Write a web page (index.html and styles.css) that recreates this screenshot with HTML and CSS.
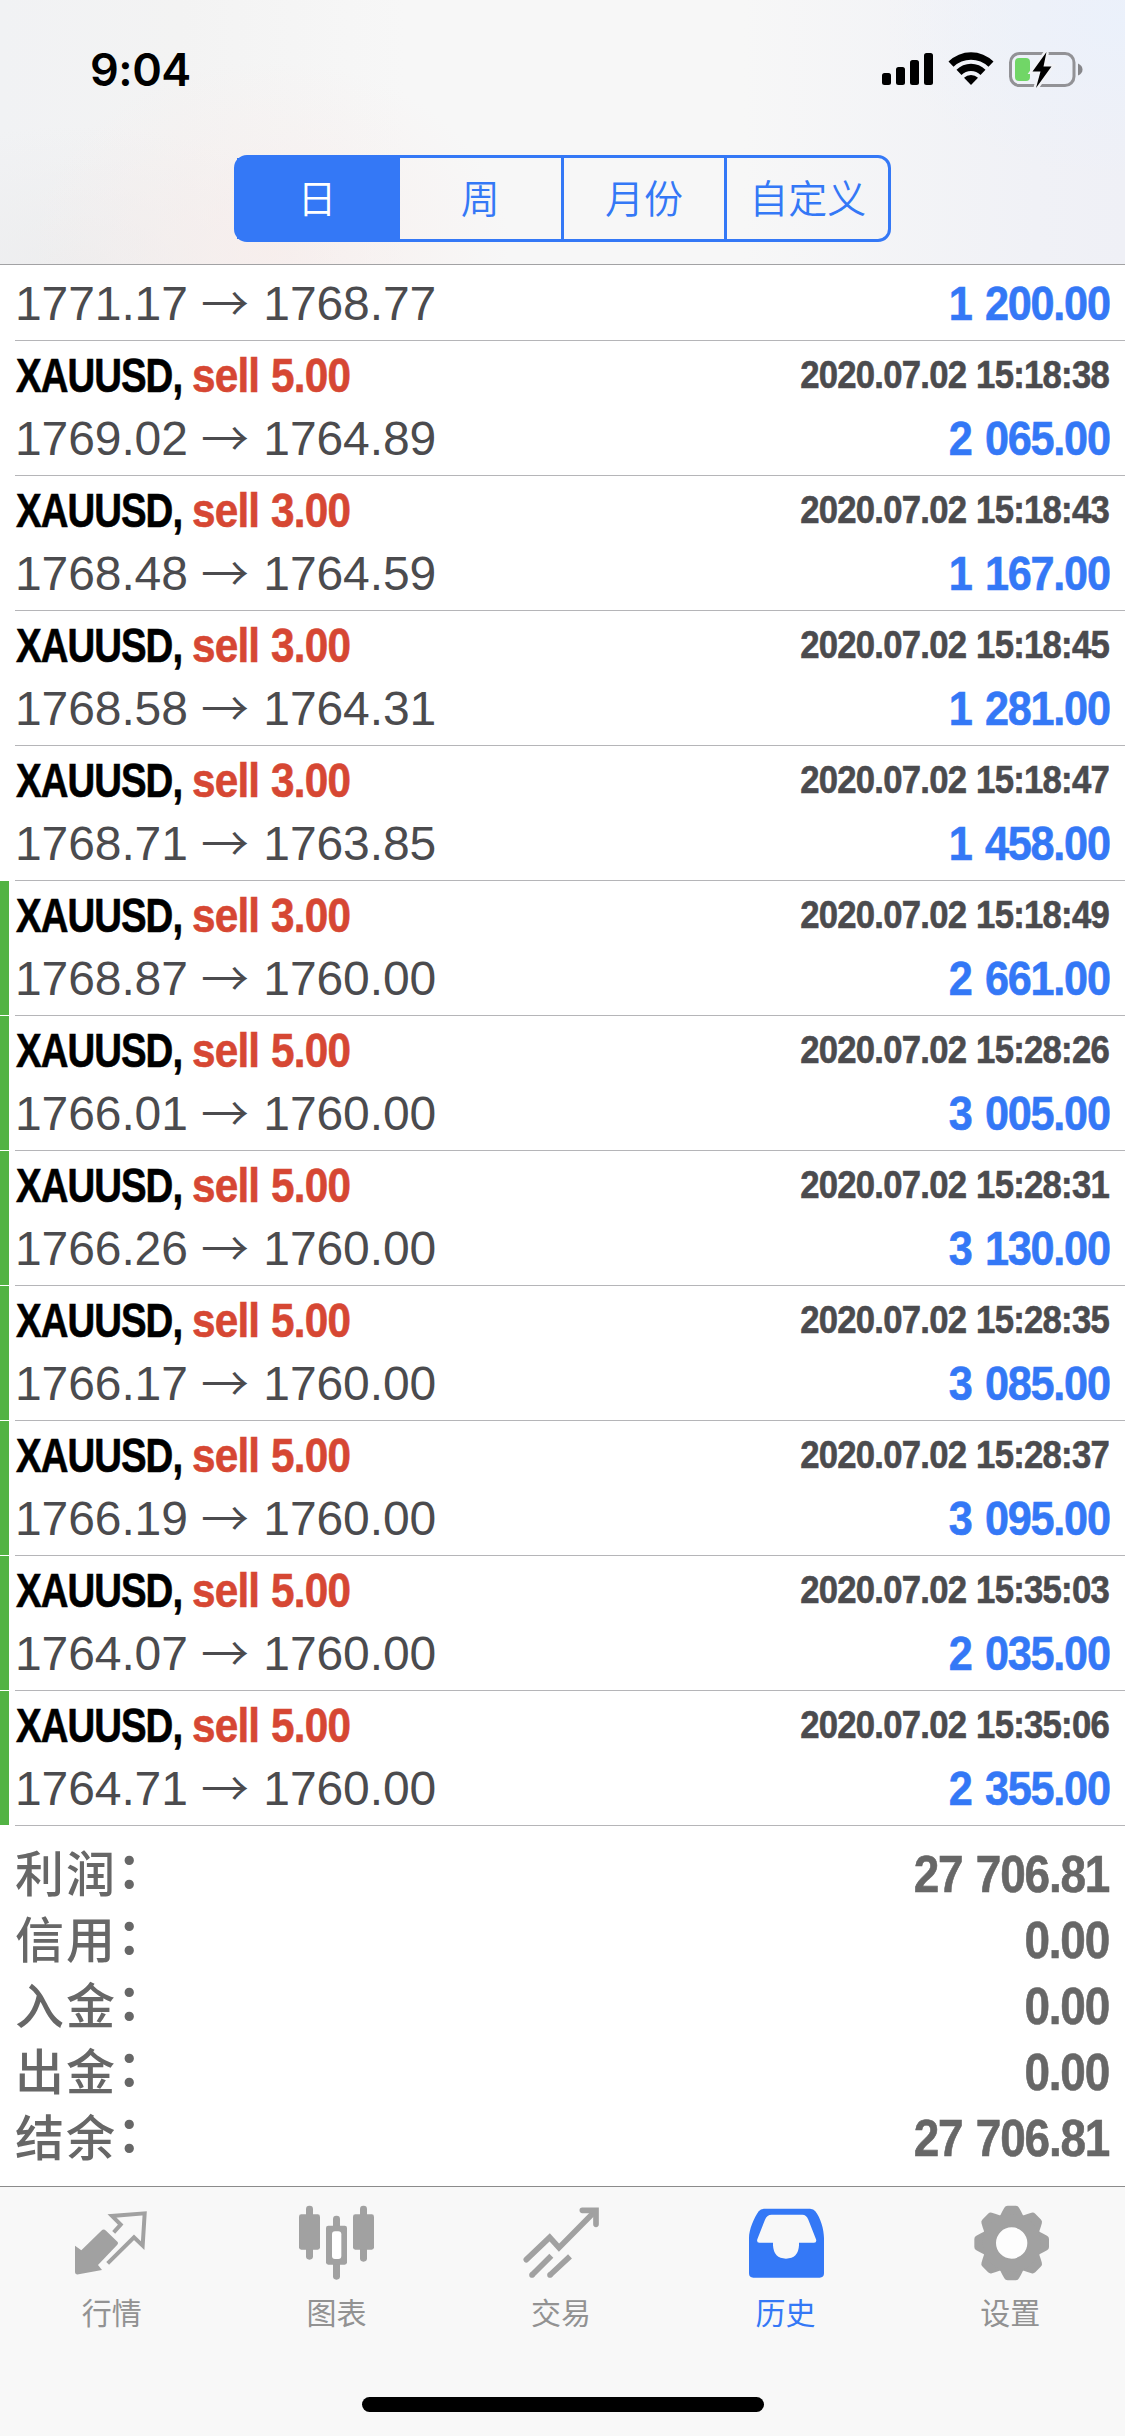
FILE: index.html
```
<!DOCTYPE html>
<html lang="zh-CN">
<head>
<meta charset="utf-8">
<title>历史</title>
<link rel="stylesheet" href="styles.css">
</head>
<body>
<header class="top">
  <div class="status">
    <span class="time">9:04</span>
    <svg class="status-icons" width="202" height="36" viewBox="0 0 202 36">
      <rect x="0" y="21" width="9" height="12" rx="2.5"/>
      <rect x="14" y="15" width="9" height="18" rx="2.5"/>
      <rect x="28" y="8" width="9" height="25" rx="2.5"/>
      <rect x="42" y="1" width="9" height="32" rx="2.5"/>
      <path d="M66.500 9.500A32 32 0 0 1 111.500 9.500L106.500 14.800A25 25 0 0 0 71.500 14.800Z"/>
      <path d="M74.500 17.700A20.500 20.500 0 0 1 103.500 17.700L98.500 22.900A13.800 13.800 0 0 0 79.500 22.900Z"/>
      <path d="M82 25.800A10 10 0 0 1 96 25.800L89 33Z"/>
      <rect x="128.500" y="1.500" width="63.500" height="32" rx="9" fill="none" stroke="#929296" stroke-width="3"/>
      <path d="M196 11.500Q200.500 13.500 200.500 17.500T196 23.500Z" fill="#86868a"/>
      <rect x="133" y="6" width="15" height="23" rx="4" fill="#71d667"/>
      <path class="bolt" d="M164.500 0L150.500 19.500H158.500L154 36L169.500 14.500H161.500Z"/>
    </svg>
  </div>
  <nav class="segments">
    <span class="segment segment-on">日</span>
    <span class="segment">周</span>
    <span class="segment">月份</span>
    <span class="segment">自定义</span>
  </nav>
</header>

<main class="deals">
  <div class="deal deal-cut"><div class="line"><span class="price">1771.17 <i class="arrow">→</i> 1768.77</span><span class="profit">1 200.00</span></div></div>
  <div class="deal"><div class="line"><span class="symbol">XAUUSD,</span><span class="side">sell 5.00</span><span class="date">2020.07.02 15:18:38</span></div><div class="line"><span class="price">1769.02 <i class="arrow">→</i> 1764.89</span><span class="profit">2 065.00</span></div></div>
  <div class="deal"><div class="line"><span class="symbol">XAUUSD,</span><span class="side">sell 3.00</span><span class="date">2020.07.02 15:18:43</span></div><div class="line"><span class="price">1768.48 <i class="arrow">→</i> 1764.59</span><span class="profit">1 167.00</span></div></div>
  <div class="deal"><div class="line"><span class="symbol">XAUUSD,</span><span class="side">sell 3.00</span><span class="date">2020.07.02 15:18:45</span></div><div class="line"><span class="price">1768.58 <i class="arrow">→</i> 1764.31</span><span class="profit">1 281.00</span></div></div>
  <div class="deal"><div class="line"><span class="symbol">XAUUSD,</span><span class="side">sell 3.00</span><span class="date">2020.07.02 15:18:47</span></div><div class="line"><span class="price">1768.71 <i class="arrow">→</i> 1763.85</span><span class="profit">1 458.00</span></div></div>
  <div class="deal deal-tp"><div class="line"><span class="symbol">XAUUSD,</span><span class="side">sell 3.00</span><span class="date">2020.07.02 15:18:49</span></div><div class="line"><span class="price">1768.87 <i class="arrow">→</i> 1760.00</span><span class="profit">2 661.00</span></div></div>
  <div class="deal deal-tp"><div class="line"><span class="symbol">XAUUSD,</span><span class="side">sell 5.00</span><span class="date">2020.07.02 15:28:26</span></div><div class="line"><span class="price">1766.01 <i class="arrow">→</i> 1760.00</span><span class="profit">3 005.00</span></div></div>
  <div class="deal deal-tp"><div class="line"><span class="symbol">XAUUSD,</span><span class="side">sell 5.00</span><span class="date">2020.07.02 15:28:31</span></div><div class="line"><span class="price">1766.26 <i class="arrow">→</i> 1760.00</span><span class="profit">3 130.00</span></div></div>
  <div class="deal deal-tp"><div class="line"><span class="symbol">XAUUSD,</span><span class="side">sell 5.00</span><span class="date">2020.07.02 15:28:35</span></div><div class="line"><span class="price">1766.17 <i class="arrow">→</i> 1760.00</span><span class="profit">3 085.00</span></div></div>
  <div class="deal deal-tp"><div class="line"><span class="symbol">XAUUSD,</span><span class="side">sell 5.00</span><span class="date">2020.07.02 15:28:37</span></div><div class="line"><span class="price">1766.19 <i class="arrow">→</i> 1760.00</span><span class="profit">3 095.00</span></div></div>
  <div class="deal deal-tp"><div class="line"><span class="symbol">XAUUSD,</span><span class="side">sell 5.00</span><span class="date">2020.07.02 15:35:03</span></div><div class="line"><span class="price">1764.07 <i class="arrow">→</i> 1760.00</span><span class="profit">2 035.00</span></div></div>
  <div class="deal deal-tp"><div class="line"><span class="symbol">XAUUSD,</span><span class="side">sell 5.00</span><span class="date">2020.07.02 15:35:06</span></div><div class="line"><span class="price">1764.71 <i class="arrow">→</i> 1760.00</span><span class="profit">2 355.00</span></div></div>
</main>

<section class="summary">
  <div class="total"><span class="label">利润<span class="colon">：</span></span><span class="value">27 706.81</span></div>
  <div class="total"><span class="label">信用<span class="colon">：</span></span><span class="value">0.00</span></div>
  <div class="total"><span class="label">入金<span class="colon">：</span></span><span class="value">0.00</span></div>
  <div class="total"><span class="label">出金<span class="colon">：</span></span><span class="value">0.00</span></div>
  <div class="total"><span class="label">结余<span class="colon">：</span></span><span class="value">27 706.81</span></div>
</section>

<footer class="bottom">
  <nav class="tabs">
    <div class="tab">
      <svg class="icon" viewBox="0 0 240 240">
        <path d="M125 88L146 65L120 39L218 31L212 128L186 103L107 181" fill="none" stroke="currentColor" stroke-width="12"/>
        <path d="M9 128L28 142L88 83Q95 76 102 83L137 117Q140 121 136 125L78 186L90 201L20 214Q9 216 9 206Z"/>
      </svg>
      <span>行情</span>
    </div>
    <div class="tab">
      <svg class="icon" viewBox="0 0 240 240">
        <rect x="27" y="8" width="21" height="162" rx="10"/><rect x="6" y="34" width="63" height="106" rx="7"/>
        <rect x="189" y="8" width="21" height="168" rx="10"/><rect x="168" y="34" width="63" height="106" rx="7"/>
        <rect x="108" y="38" width="21" height="192" rx="10"/><rect x="87" y="68" width="63" height="117" rx="7"/>
        <rect x="105" y="85" width="28" height="83" rx="9" fill="#fff"/>
      </svg>
      <span>图表</span>
    </div>
    <div class="tab">
      <svg class="icon" viewBox="0 0 240 240">
        <g fill="none" stroke="currentColor" stroke-width="17">
          <path d="M16 170L86 103L114 134L222 25" stroke-linecap="round"/>
          <path d="M184 22H225V64" stroke-linecap="round"/>
          <path d="M33 216L91 158M87 216L147 160"/>
        </g>
        <circle cx="33" cy="216" r="8.500"/><circle cx="87" cy="216" r="8.500"/>
      </svg>
      <span>交易</span>
    </div>
    <div class="tab tab-on">
      <svg class="icon" viewBox="0 0 240 240">
        <path fill-rule="evenodd" d="M9 211V105C9 80 24 45 38 25Q44 17 55 17H192Q203 17 208 25C224 45 234 80 234 105V211Q234 224 221 224H22Q9 224 9 211ZM81 119H40Q31 119 34 109L57 50Q63 35 77 35H169Q181 35 187 50L210 109Q213 119 204 119H159V127Q157 167 120 167Q83 167 81 127Z"/>
      </svg>
      <span>历史</span>
    </div>
    <div class="tab">
      <svg class="icon" viewBox="0 0 240 240">
        <defs><path id="tooth" d="M84 42Q89 37 94 25L100 14Q103 8 110 8H134Q141 8 144 14L150 25Q155 37 160 42Z"/></defs>
        <use href="#tooth"/><use href="#tooth" transform="rotate(45 122 120)"/><use href="#tooth" transform="rotate(90 122 120)"/><use href="#tooth" transform="rotate(135 122 120)"/><use href="#tooth" transform="rotate(180 122 120)"/><use href="#tooth" transform="rotate(225 122 120)"/><use href="#tooth" transform="rotate(270 122 120)"/><use href="#tooth" transform="rotate(315 122 120)"/>
        <circle cx="122" cy="120" r="67" fill="#fdfdfd" stroke="currentColor" stroke-width="40"/>
      </svg>
      <span>设置</span>
    </div>
  </nav>
  <div class="home"></div>
</footer>
</body>
</html>
```
FILE: styles.css
```
* { box-sizing: border-box; }
body {
  margin: 0;
  width: 1125px;
  height: 2436px;
  display: flex;
  flex-direction: column;
  background: #fff;
  color: #4b4b4e;
  font-family: "Liberation Sans", "Noto Sans CJK SC", sans-serif;
}

/* Header */
.top {
  height: 265px;
  flex: none;
  border-bottom: 1px solid #a2a2a4;
  background:
    radial-gradient(ellipse 240px 190px at 270px 250px, rgba(248, 237, 235, .8), rgba(248, 237, 235, 0)),
    radial-gradient(ellipse 260px 140px at 80px 265px, rgba(236, 236, 237, .8), rgba(236, 236, 237, 0)),
    radial-gradient(ellipse 240px 160px at 1125px 20px, rgba(234, 241, 252, .8), rgba(234, 241, 252, 0)),
    linear-gradient(90deg, #f1f2f4 0, #f3f3f3 16%, #f7f7f7 36%, #f7f7f7 66%, #f0f1f6 92%, #eff0f6 100%);
}
.status {
  height: 155px;
  display: flex;
  justify-content: space-between;
  padding: 52px 41px 0 90px;
}
.time {
  font: 600 45px/35px Inter, sans-serif;
  letter-spacing: -.5px;
  color: #000;
}
.status-icons { display: block; }
.bolt { stroke: #f1f2f6; stroke-width: 5; paint-order: stroke; }
.segments {
  width: 657px;
  height: 87px;
  margin: 0 auto;
  display: flex;
  border: 3px solid #3478f6;
  border-radius: 13px;
}
.segment {
  flex: 1 0 0;
  text-align: center;
  border-left: 3px solid #3478f6;
  color: #3478f6;
  font: 350 39px/77px "Noto Sans CJK SC", sans-serif;
}
.segment:first-child { flex: 0 0 160px; border-left: 0; }
.segment-on { background: #3478f6; color: #fff; }

/* Deals */
.deals { flex: none; }
.deal {
  height: 135px;
  padding: 3px 16px 0;
  border-bottom: 1px solid transparent;
  background: linear-gradient(#b5b5b8, #b5b5b8) 15px 100% / 1110px 1px no-repeat border-box;
}
.deal-cut { height: 76px; padding-top: 7px; }
.deal-tp { box-shadow: inset 9px 0 #53b344; }
.line { height: 63px; line-height: 63px; display: flex; font-size: 48px; white-space: pre; }
.symbol, .side, .date, .profit, .value {
  font-weight: 700;
  transform-origin: 0 50%;
  -webkit-text-stroke: .6px currentColor;
}
.price { margin-left: -1px; letter-spacing: -.1px; }
.symbol { width: 176px; color: #000; transform: scaleX(.8); letter-spacing: -1.200px; }
.side { color: #d64733; transform: scaleX(.88); letter-spacing: -.9px; word-spacing: 1px; }
.date, .profit, .value { margin-right: -1px; transform-origin: 100% 50%; }
.date { margin-left: auto; font-size: 39px; line-height: 62px; transform: scaleX(.89); letter-spacing: -.85px; word-spacing: 1px; margin-right: 0; }
.profit { margin-left: auto; color: #3478f6; transform: scaleX(.9); letter-spacing: -1.400px; word-spacing: 3px; }
.arrow { display: inline-block; width: 49px; font: 350 48px/48px "Noto Sans CJK SC", sans-serif; transform: translateY(1px); }

/* Totals */
.summary { flex: 1; padding: 15px 16px 0; color: #676767; }
.total { height: 66px; display: flex; align-items: flex-start; justify-content: space-between; }
.label { margin-left: -1px; font: 500 49px/60px "Noto Sans CJK SC", sans-serif; letter-spacing: 2px; }
.colon { display: inline-block; font-weight: 700; transform: translateY(-4px); }
.value { font-size: 51px; line-height: 67px; transform: scaleX(.9); letter-spacing: -1.300px; word-spacing: 2px; margin-right: 0; }

/* Tab bar */
.bottom {
  height: 250px;
  flex: none;
  border-top: 1px solid #8b8b8b;
  background: #f8f8f8;
}
.tabs { height: 210px; padding: 16px 2px 0 0; display: flex; }
.tab {
  flex: 1;
  display: flex;
  flex-direction: column;
  align-items: center;
  color: #929292;
  font: 400 30px/44px "Noto Sans CJK SC", sans-serif;
}
.tab span { margin-right: 1px; }
.tab-on { color: #3478f6; }
.icon { width: 80px; height: 80px; margin-bottom: 6px; fill: currentColor; color: #a1a1a1; }
.tab-on .icon { color: #3478f6; }
.home { width: 402px; height: 15px; margin: 0 auto; border-radius: 8px; background: #000; }
```
